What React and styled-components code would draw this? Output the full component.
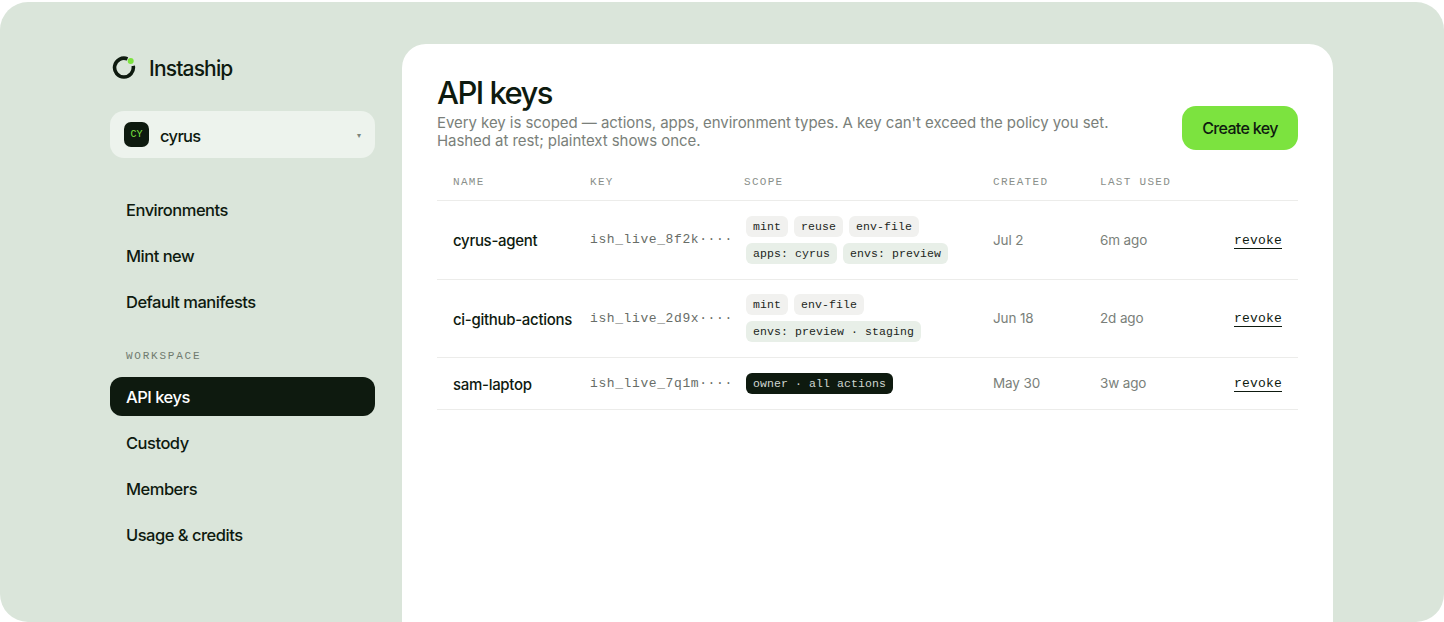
import React from "react";
import styled, { createGlobalStyle } from "styled-components";

const sans = `Inter, "Liberation Sans", sans-serif`;
const mono = `"Liberation Mono", "DejaVu Sans Mono", monospace`;

const Global = createGlobalStyle`
  html, body { margin: 0; padding: 0; background: #fff; }
  body { font-family: ${sans}; color: #0e1a0f; }
  * { box-sizing: border-box; }
`;

const Page = styled.div`
  width: 1444px; height: 622px; overflow: hidden; padding-top: 2px; background: #fff;
`;
const Shell = styled.div`
  height: 620px; background: #dae5da; border-radius: 28px; overflow: hidden;
  padding: 42px 111px 0 110px; display: grid; grid-template-columns: 265px 931px; column-gap: 27px;
`;
const Sidebar = styled.aside`
  display: flex; flex-direction: column;
`;
const Brand = styled.div`
  display: flex; align-items: center; gap: 13px; height: 48px; padding-left: 2px; margin-bottom: 19px;
  font-size: 21px; font-weight: 500; letter-spacing: -0.04em;
`;
const Workspace = styled.div`
  height: 47px; border-radius: 14px; background: #edf3ed; display: flex; align-items: center;
  padding: 0 14px; gap: 11px; margin-bottom: 32px;
`;
const WorkspaceName = styled.span`
  font-size: 16.5px; font-weight: 500; letter-spacing: -0.04em; padding-top: 2px;
`;
const Avatar = styled.span`
  width: 25px; height: 25px; border-radius: 7px; background: #0e1a0f; color: #7ce33f;
  font-family: ${mono}; font-size: 10px; display: flex; align-items: center; justify-content: center;
`;
const Caret = styled.span`
  margin-left: auto; font-size: 8px; color: #7c847c;
`;
const Nav = styled.nav`
  display: flex; flex-direction: column; gap: 7px;
`;
const NavItem = styled.a`
  height: 39px; border-radius: 12px; padding: 0 16px; display: flex; align-items: center;
  font-size: 16.5px; font-weight: 500; letter-spacing: -0.03em;
  color: ${p => p.$active ? "#fff" : "#0e1a0f"};
  background: ${p => p.$active ? "#0e1a0f" : "transparent"};
`;
const NavLabel = styled.div`
  font-family: ${mono}; font-size: 11px; letter-spacing: 0.16em; color: #6f7a6f;
  padding: 0 16px; margin: 27px 0 13px; height: 16px; line-height: 16px;
`;
const Panel = styled.main`
  background: #fff; border-radius: 24px 24px 0 0; padding: 30px 35px 0 35px; height: 600px;
`;
const Header = styled.header`
  display: flex; justify-content: space-between; align-items: flex-end; margin-bottom: 14px; padding-top: 2px;
`;
const Title = styled.h1`
  margin: -1px 0 0; font-size: 31px; line-height: 36px; font-weight: 500; letter-spacing: -0.05em; color: #0e1a0f;
`;
const Desc = styled.p`
  margin: 3px 0 0; font-size: 15px; line-height: 18px; color: #7a7f7a; width: 700px; letter-spacing: -0.06px;
`;
const CreateButton = styled.button`
  width: 116px; height: 44px; border: 0; border-radius: 14px; background: #7ce33f; color: #0e1a0f;
  font-family: ${sans}; font-size: 16px; font-weight: 500; letter-spacing: -0.04em; padding: 0;
`;
const Row = styled.div`
  display: grid; grid-template-columns: 137px 154px 249px 107px 1fr auto; align-items: center;
  padding: 0 16px; min-height: ${p => p.$h}px; border-bottom: 1px solid #ececea;
`;
const Th = styled.div`
  font-family: ${mono}; font-size: 11px; letter-spacing: 0.118em; color: #8a8f8a;
`;
const Name = styled.div`
  font-size: 15px; font-weight: 500; letter-spacing: -0.02em; color: #0e1a0f; padding-top: 2px;
`;
const KeyText = styled.div`
  font-family: ${mono}; font-size: 13px; letter-spacing: 0.6px; color: #686d68; white-space: nowrap;
`;
const Tags = styled.div`
  display: flex; flex-direction: column; gap: 6px; margin-left: 2px; align-items: flex-start;
`;
const TagLine = styled.div`
  display: flex; gap: 6px;
`;
const colors = {
  plain: ["#f1f1ef", "#1c261c"],
  scope: ["#e8efe8", "#1c261c"],
  owner: ["#0e1a0f", "#cfd6cf"],
};
const Tag = styled.span`
  height: 21px; line-height: 21px; padding: 0 7px; border-radius: 6px; font-family: ${mono};
  font-size: 11.5px; letter-spacing: 0.1px; white-space: nowrap;
  background: ${p => colors[p.$kind][0]}; color: ${p => colors[p.$kind][1]};
`;
const Cell = styled.div`
  font-size: 13.5px; color: #7a7f7a; letter-spacing: -0.01em;
`;
const Revoke = styled.a`
  font-family: ${mono}; font-size: 13px; color: #0e1a0f; letter-spacing: 0.2px;
  border-bottom: 1px solid #0e1a0f; line-height: 15px; display: block; padding-top: 2px;
`;

const Logo = () => (
  <svg width="24" height="24" viewBox="0 0 24 24" fill="none">
    <path d="M15.5 2.9A9.4 9.4 0 1 0 21.2 9.9" stroke="#0e1a0f" strokeWidth="3.6" />
    <circle cx="18.7" cy="4.9" r="3" fill="#7ce33f" />
  </svg>
);

const nav1 = ["Environments", "Mint new", "Default manifests"];
const nav2 = ["API keys", "Custody", "Members", "Usage & credits"];
const rows = [
  { name: "cyrus-agent", key: "ish_live_8f2k····", h: 78.5, lines: [[["plain","mint"],["plain","reuse"],["plain","env-file"]],[["scope","apps: cyrus"],["scope","envs: preview"]]], created: "Jul 2", used: "6m ago" },
  { name: "ci-github-actions", key: "ish_live_2d9x····", h: 78.5, lines: [[["plain","mint"],["plain","env-file"]],[["scope","envs: preview · staging"]]], created: "Jun 18", used: "2d ago" },
  { name: "sam-laptop", key: "ish_live_7q1m····", h: 51.5, lines: [[["owner","owner · all actions"]]], created: "May 30", used: "3w ago" },
];

export default function App() {
  return (
    <Page>
      <Global />
      <Shell>
        <Sidebar>
          <Brand><Logo />Instaship</Brand>
          <Workspace><Avatar>CY</Avatar><WorkspaceName>cyrus</WorkspaceName><Caret>▾</Caret></Workspace>
          <Nav>{nav1.map(n => <NavItem key={n}>{n}</NavItem>)}</Nav>
          <NavLabel>WORKSPACE</NavLabel>
          <Nav>{nav2.map((n, i) => <NavItem key={n} $active={i === 0}>{n}</NavItem>)}</Nav>
        </Sidebar>
        <Panel>
          <Header>
            <div>
              <Title>API keys</Title>
              <Desc>Every key is scoped — actions, apps, environment types. A key can't exceed the policy you set. Hashed at rest; plaintext shows once.</Desc>
            </div>
            <CreateButton>Create key</CreateButton>
          </Header>
          <Row $h={37}>
            <Th>NAME</Th><Th>KEY</Th><Th>SCOPE</Th><Th>CREATED</Th><Th>LAST USED</Th><span />
          </Row>
          {rows.map(r => (
            <Row key={r.name} $h={r.h}>
              <Name>{r.name}</Name>
              <KeyText>{r.key}</KeyText>
              <Tags>
                {r.lines.map((l, i) => (
                  <TagLine key={i}>{l.map(([k, t]) => <Tag key={t} $kind={k}>{t}</Tag>)}</TagLine>
                ))}
              </Tags>
              <Cell>{r.created}</Cell>
              <Cell>{r.used}</Cell>
              <Revoke>revoke</Revoke>
            </Row>
          ))}
        </Panel>
      </Shell>
    </Page>
  );
}
